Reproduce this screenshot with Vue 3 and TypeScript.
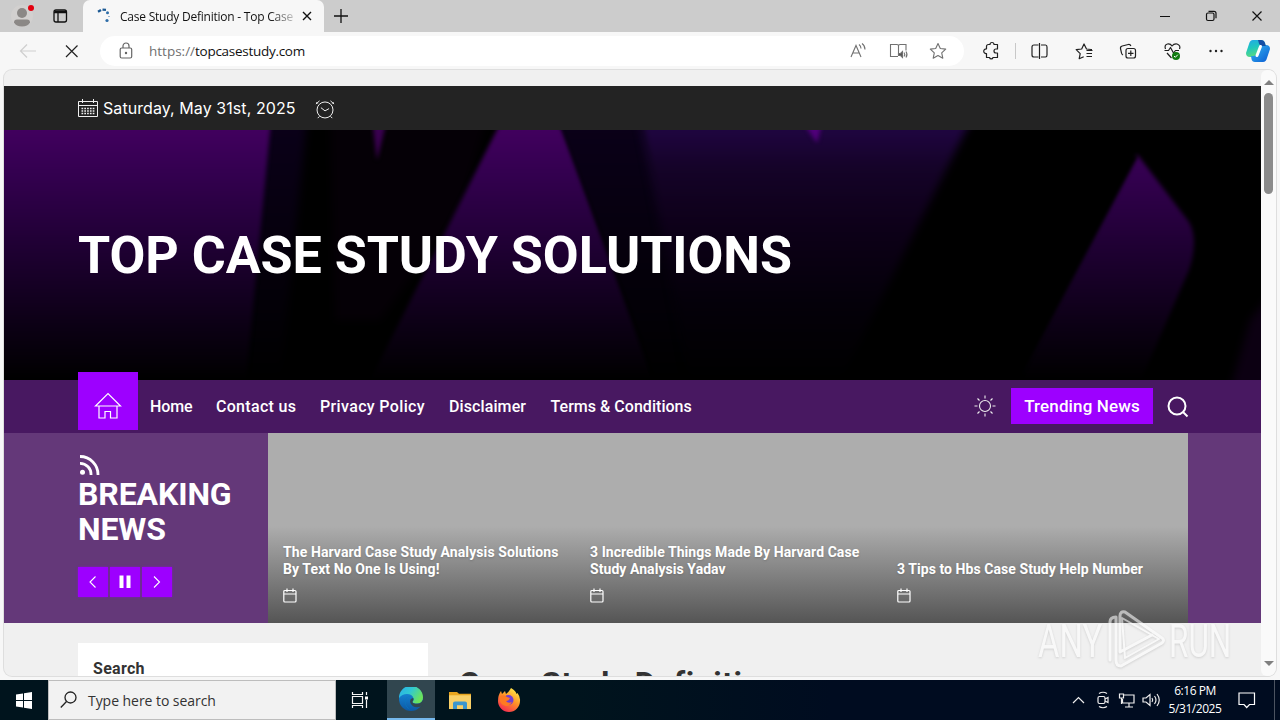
<script setup lang="ts">
interface Card { lines: string[] }
const nav: { label: string; cls: string }[] = [
  { label: 'Home', cls: 'n1' },
  { label: 'Contact us', cls: 'n2' },
  { label: 'Privacy Policy', cls: 'n3' },
  { label: 'Disclaimer', cls: 'n4' },
  { label: 'Terms & Conditions', cls: 'n5' },
]
const cards: Card[] = [
  { lines: ['The Harvard Case Study Analysis Solutions', 'By Text No One Is Using!'] },
  { lines: ['3 Incredible Things Made By Harvard Case', 'Study Analysis Yadav'] },
  { lines: ['3 Tips to Hbs Case Study Help Number'] },
]
</script>

<template>
  <div class="desktop">
    <div class="tabbar">
      <div class="tabtools">
        <svg width="82" height="32" viewBox="0 0 82 32">
          <circle cx="22" cy="16" r="11" fill="#d2d0cf" />
          <circle cx="22" cy="13" r="5" fill="#8b8886" />
          <path d="M14 22.500q0-3 3-3h10q3 0 3 3q-2 4-8 4t-8-4z" fill="#8b8886" />
          <circle cx="31" cy="8" r="3" fill="#e3000f" />
          <rect x="54" y="10" width="12.500" height="12" rx="2" fill="none" stroke="#111" stroke-width="1.300" />
          <path d="M54 12.500h12.500M54.500 11.300h11.500M58 12v10" stroke="#111" stroke-width="1.300" />
        </svg>
      </div>
      <div class="tab">
        <svg class="spinner" width="16" height="16" viewBox="0 0 16 16">
          <path d="M2 3.800 5 2M6.500 1.600 10 1.900" stroke="#1d5a94" stroke-width="2.400" />
          <g fill="#2e6da8"><circle cx="11.500" cy="4.800" r="1.500" /><circle cx="11" cy="12.500" r="1.600" /><circle cx="13" cy="8.500" r=".6" /></g>
        </svg>
        <span class="tabtitle"><span>Case Study Definition - Top Case</span></span>
        <svg width="10" height="10" viewBox="0 0 10 10"><path d="M1 1l8 8M9 1L1 9" stroke="#111" stroke-width="1.400" /></svg>
      </div>
      <svg class="newtab" width="16" height="16" viewBox="0 0 16 16"><path d="M1 8h14M8 1v14" stroke="#111" stroke-width="1.300" /></svg>
      <svg class="winctl" width="120" height="32" viewBox="0 0 120 32" fill="none" stroke="#111" stroke-width="1.200">
        <path d="M10 16.500h10M102.500 11.500l9 9M111.500 11.500l-9 9" />
        <rect x="56.500" y="13" width="7.500" height="7.500" rx="1.500" />
        <path d="M58.500 11.300h5.500q2 0 2 2v5" />
      </svg>
    </div>

    <div class="toolbar">
      <svg class="navicons" width="98" height="38" viewBox="0 0 98 38" fill="none">
        <path d="M36 19H21M27 12.500L20.500 19l6.500 6.500" stroke="#cfcfcf" stroke-width="1.200" />
        <path d="M66 13.500l11.500 11.500M77.500 13.500L66 25" stroke="#222" stroke-width="1.200" />
      </svg>
      <div class="address">
        <svg width="14" height="18" viewBox="0 0 14 18" fill="none" stroke="#666" stroke-width="1.200">
          <rect x="1.200" y="6" width="11.500" height="10" rx="1.500" /><path d="M4 6V4a3 3 0 0 1 6 0v2" /><circle cx="7" cy="11" r=".6" fill="#666" />
        </svg>
        <span class="url"><i>https://</i>topcasestudy.com</span>
        <svg class="addr-icons" width="104" height="20" viewBox="0 0 104 20" fill="none" stroke="#717171" stroke-width="1.100">
          <path d="M3 16L8 4.500 13 16M4.800 12h6.500M11 3.500q2 1.500 2 4M14 2.500q3 2 3 6" />
          <path d="M50 15.500h-7.500V3.500h6.500q1.500 0 1.500 1.500V14.500M50.500 5Q50.500 3.500 52 3.500h6v6" />
          <path d="M50.500 12.500h2l2-2v6l-2-2h-2z" fill="#555" /><path d="M56 11.500q1.500 2 0 4M58 10.500q2 3 0 6" />
          <path d="M90 2.500l2.300 5 5.400.6-4 3.700 1.100 5.400-4.800-2.700-4.800 2.700 1.100-5.400-4-3.700 5.400-.6z" stroke-linejoin="round" />
        </svg>
      </div>
      <svg class="tools" width="306" height="38" viewBox="0 0 306 38" fill="none" stroke="#202020" stroke-width="1.200" stroke-linejoin="round">
        <path d="M11.500 14.500q0-2 2-2h1.500a2 2 0 0 1 4 0h3.500v4.500h-1.500a2 2 0 0 0 0 4H22.500v4.500h-4.500a1.800 1.800 0 0 1-3.500 0h-3V21.500a2.300 2.300 0 1 1 0-4.500z" />
        <path d="M40.500 11v16" stroke="#c8c8c8" stroke-width="1" />
        <path d="M63.500 13h-4.500q-2 0-2 2v8q0 2 2 2h4.500M66 13h4.500q1.500 0 1.500 2v8q0 2-1.500 2H66M64.500 11v16" />
        <path d="M117 17.500h-1l-4.500-.5L109 12l-2.300 5-5.500.7 4 4-1 5 4.500-2M111.500 18.500h6M111.500 21.500h5.500M111.500 24.500h5.500" />
        <rect x="151" y="16.500" width="9.500" height="9.500" rx="2" /><path d="M155.800 18.500v5.500M153 21.300h5.500M148 23q-1.200-.5-1.500-2l-1-4.500q-.3-2 1.700-2.500l6-1.500q2-.4 2.700 1.500" />
        <path d="M190.500 17q-1.500-4 2-5 3-.5 4.500 2 2-2.500 5-2 4 1.500 2.500 5M189.500 18.500h4l2-3 3 5.500 2-2.500h3.500M192 21l4.500 5" />
        <circle cx="201" cy="24" r="4" fill="#0f7b0f" stroke="none" /><path d="M199 24l1.300 1.300 2.500-2.600" stroke="#fff" stroke-width="1" />
        <g fill="#202020" stroke="none"><circle cx="235.500" cy="19" r="1.200" /><circle cx="241" cy="19" r="1.200" /><circle cx="246.500" cy="19" r="1.200" /></g>
      </svg>
      <svg class="copilot" width="26" height="24" viewBox="0 0 26 24">
        <defs>
          <linearGradient id="cpa" x1="0" y1="0" x2=".3" y2="1"><stop offset="0" stop-color="#22a7ea" /><stop offset=".5" stop-color="#20c7bd" /><stop offset="1" stop-color="#59d982" /></linearGradient>
          <linearGradient id="cpb" x1="0" y1="0" x2="1" y2="1"><stop offset="0" stop-color="#35b9f3" /><stop offset="1" stop-color="#0b5bd2" /></linearGradient>
        </defs>
        <path d="M8 1h8q3 0 4 3l.8 3h-3q-2 0-3 3l-2 6q-1 2-3 2H5q-4 0-4-4l3-9q1-4 4-4z" fill="url(#cpa)" />
        <path d="M18 23h-8q-3 0-3.500-3L6 17h3q2 0 3-3l2-6q.8-2 3-2h4q4 0 4 4l-3 9q-1 4-4 4z" fill="url(#cpb)" />
        <path d="M13 1h3q3 0 4 3l.8 3h-3.500Q15 7 14 4.500z" fill="#164fa5" />
        <path d="M15.500 7.500l-3.500 9" stroke="#fff" stroke-width="3" stroke-linecap="round" />
      </svg>
    </div>

    <div class="viewport">
      <main class="page">
        <div class="topbar">
          <svg width="20" height="19" viewBox="0 0 20 19" fill="none" stroke="#f0f0f0" stroke-width="1">
            <path d="M.5 2.500h19v15H.5zM.5 6.500h19M4.500 0v4M15.500 0v4" /><path d="M3.500 9.500h13M3.500 12h13M3.500 14.500h13" stroke-width="1.300" stroke-dasharray="1.700 1.100" />
          </svg>
          <span>Saturday, May 31st, 2025</span>
          <svg class="clock" width="20" height="21" viewBox="0 0 22 22" fill="none" stroke="#eee" stroke-width="1.100">
            <circle cx="11" cy="11.500" r="8.800" /><path d="M11 12.500L6.500 9M11 12.500l4.500-2.500M5 18.500l-2 2M17 18.500l2 2M1 5l4-3.500M21 5l-4-3.500M1.500 3l1.500 1.500M20.500 3L19 4.500" />
          </svg>
        </div>
        <header class="hero">
          <svg class="art" width="1257" height="250" viewBox="4 130 1257 250" preserveAspectRatio="none">
            <defs>
              <linearGradient id="pur" x1="0" y1="130" x2="0" y2="380" gradientUnits="userSpaceOnUse"><stop offset="0" stop-color="#41005e" /><stop offset=".18" stop-color="#33004f" /><stop offset=".5" stop-color="#1d0030" /><stop offset=".8" stop-color="#0b0013" /><stop offset="1" stop-color="#000" /></linearGradient>
              <linearGradient id="mid" x1="0" y1="130" x2="0" y2="380" gradientUnits="userSpaceOnUse"><stop offset="0" stop-color="#1f0540" /><stop offset=".15" stop-color="#150328" /><stop offset=".4" stop-color="#0d0018" /><stop offset=".7" stop-color="#040009" /><stop offset="1" stop-color="#000" /></linearGradient>
              <linearGradient id="navy" x1="0" y1="130" x2="0" y2="380" gradientUnits="userSpaceOnUse"><stop offset="0" stop-color="#0a0018" /><stop offset="1" stop-color="#000" /></linearGradient>
              <filter id="soft" x="-10%" y="-10%" width="120%" height="120%" color-interpolation-filters="sRGB"><feGaussianBlur stdDeviation="2" /></filter>
              <filter id="softer" x="-30%" y="-30%" width="160%" height="160%" color-interpolation-filters="sRGB"><feGaussianBlur stdDeviation="4" /></filter>
            </defs>
            <rect x="4" y="130" width="1257" height="250" fill="#000" />
            <path d="M258 110h50l-28 270h-40z" fill="url(#navy)" filter="url(#softer)" />
            <path d="M330 110h160l-30 100-80 110h-45z" fill="#050006" filter="url(#softer)" />
            <path d="M-20 110h292l-26 270H-20z" fill="url(#pur)" filter="url(#soft)" />
            <path d="M508 108h47l102 282H366l22-45z" fill="url(#pur)" filter="url(#soft)" />
            <path d="M560 125h80l35 110 20 145h-38z" fill="url(#navy)" filter="url(#soft)" />
            <path d="M638 110h338l-136 270H690z" fill="url(#mid)" filter="url(#softer)" />
            <path d="M372 120h15l-10 40z" fill="#3a0050" filter="url(#soft)" />
            <path d="M804 124h18l-5 19z" fill="#51007b" filter="url(#soft)" />
            <path d="M1137 154l52 68q10 18 0 48l-48 110H1018z" fill="url(#pur)" filter="url(#soft)" />
            <path d="M1290 270l-40 50-20 70h50z" fill="#0c0012" filter="url(#softer)" />
            <path d="M1138 155L1017 380h-80l100-225z" fill="#000" filter="url(#soft)" />
          </svg>
          <h1>TOP CASE STUDY SOLUTIONS</h1>
        </header>
        <nav class="mainnav">
          <a class="homebtn">
            <svg width="28" height="28" viewBox="0 0 28 28" fill="none" stroke="#fff" stroke-width="1.200"><path d="M1.500 14L14 1.500 26.500 14zM5 14v12h6v-6.500h5.500V26H23V14" /></svg>
          </a>
          <a v-for="n in nav" :key="n.label" class="item" :class="n.cls">{{ n.label }}</a>
          <div class="navright">
            <svg width="22" height="22" viewBox="0 0 22 22" fill="none" stroke="#eee" stroke-width="1.100"><circle cx="11" cy="11" r="5.500" /><path d="M11 .5v3M11 18.500v3M.5 11h3M18.500 11h3M3.500 3.500l2 2M16.500 16.500l2 2M18.500 3.500l-2 2M5.500 16.500l-2 2" /></svg>
            <a class="trending">Trending News</a>
            <svg class="find" width="22" height="22" viewBox="0 0 22 22" fill="none" stroke="#fff" stroke-width="2"><circle cx="10" cy="10" r="8.500" /><path d="M16 16l4.500 4.500" /></svg>
          </div>
        </nav>
        <section class="breaking">
          <div class="bleft">
            <svg width="22" height="20" viewBox="0 0 22 20" fill="none" stroke="#fff" stroke-width="2.800"><circle cx="4.500" cy="17.200" r="2.500" fill="#fff" stroke="none" /><path d="M2 8.300A11 11 0 0 1 13 20M2 1.500A18 18 0 0 1 20 20" /></svg>
            <h2>BREAKING<br />NEWS</h2>
            <div class="controls">
              <b><svg width="30" height="30" viewBox="0 0 30 30"><path d="M17.500 9.500L12 15l5.500 5.500" /></svg></b>
              <b><svg width="30" height="30" viewBox="0 0 30 30"><path class="bars" d="M11.500 8.500V21M18.500 8.500V21" /></svg></b>
              <b><svg width="30" height="30" viewBox="0 0 30 30"><path d="M12 9.500l5.500 5.500-5.500 5.500" /></svg></b>
            </div>
          </div>
          <div class="cards">
            <article v-for="(c, i) in cards" :key="i" class="card" :class="'c' + i">
              <h3><span v-for="l in c.lines" :key="l">{{ l }}</span></h3>
              <svg width="14" height="15" viewBox="0 0 14 15" fill="none" stroke="#fff" stroke-width="1.200"><rect x=".8" y="2.500" width="12.200" height="11.500" rx="1" /><path d="M1 6h12M4 .5v3.500M10 .5v3.500" /></svg>
            </article>
          </div>
        </section>
        <section class="body">
          <aside>Search</aside>
          <h2>Case Study Definition</h2>
        </section>
      </main>
      <div class="scroll"><i class="up"></i><i class="thumb"></i><i class="down"></i></div>
    </div>

    <footer class="taskbar">
      <div class="start"><svg width="17" height="17" viewBox="0 0 17 17" fill="#fff"><path d="M0 2.500l7-1V8H0zM8 1.300L16 0v8H8zM0 9h7v6.500l-7-1zM8 9h8v8l-8-1.300z" /></svg></div>
      <div class="search">
        <svg width="17" height="18" viewBox="0 0 17 18" fill="none" stroke="#222" stroke-width="1.300"><circle cx="10.500" cy="6.500" r="5.500" /><path d="M6.500 10.500L.8 16.500" /></svg>
        <span>Type here to search</span>
      </div>
      <div class="app view"><svg width="18" height="18" viewBox="0 0 18 18" fill="none" stroke="#f5f5f5" stroke-width="1.200"><path d="M1.500 1v2.500h10V1M1.500 17v-2.500h10V17M1.500 5.500h10v7h-10zM15.500 1v3M15.500 9v8" /><path d="M14 5.500h3v3h-3z" fill="#fff" stroke="none" /></svg></div>
      <div class="app active">
        <svg width="24" height="24" viewBox="0 0 24 24">
          <defs>
            <linearGradient id="eg" x1="0" y1="0" x2="1" y2=".5"><stop offset="0" stop-color="#28aeea" /><stop offset=".5" stop-color="#31c8d3" /><stop offset="1" stop-color="#6be45a" /></linearGradient>
            <linearGradient id="eb" x1="0" y1="0" x2="0" y2="1"><stop offset="0" stop-color="#1990e2" /><stop offset="1" stop-color="#0c59a4" /></linearGradient>
          </defs>
          <circle cx="12" cy="12" r="12" fill="url(#eb)" />
          <path d="M0 11A12 12 0 0 1 24 10.500q0 6-6 6-4.500 0-4.500-1.800 1.500-1.500 1-3.500Q13 7 8 7 3 7 0 11z" fill="url(#eg)" />
          <path d="M14.200 10.500q-4.500-3-7 1.500-2.500 6 4 11-7-4-4.500-11 2.500-4.500 7.500-1.500z" fill="#087bc1" />
          <path d="M14.300 11q.8 2-.9 3.700 0 2 5 2 3.600 0 5.600-4v5q-1 1.500-1.500 1.500-5 2-8.500 0Q10 16 11.500 12.500q1-1.500 2.800-1.500z" fill="#31464f" />
        </svg>
      </div>
      <div class="app"><svg width="22" height="19" viewBox="0 0 22 20" preserveAspectRatio="none"><path d="M0 1h8l2 2h12v5H0z" fill="#e8a51e" /><path d="M0 4.500h22V19H0z" fill="#f9d067" /><path d="M4 19v-6q0-2 2-2h10q2 0 2 2v6h-4v-4H8v4z" fill="#3c97cf" /></svg></div>
      <div class="app"><svg width="24" height="24" viewBox="0 0 24 24">
        <defs><linearGradient id="ff" x1=".8" y1="0" x2=".2" y2="1"><stop offset="0" stop-color="#fff04b" /><stop offset=".45" stop-color="#ff9527" /><stop offset="1" stop-color="#f52354" /></linearGradient></defs>
        <path d="M14 0q5 3 5.500 6l1-1q3 4 2.500 8a11 11 0 0 1-22 0Q1 7 4 3l1 3 3-3 1 3q3-2 5-6z" fill="url(#ff)" />
        <circle cx="11.500" cy="12" r="5" fill="#713fd2" /><path d="M3 8q4-2 7 1l3 1q-1 3-4 3 2 3 6 1-2 4-6 4-5-1-6-5z" fill="#ff7a22" />
      </svg></div>
      <div class="tray">
        <svg width="92" height="20" viewBox="0 0 92 20" fill="none" stroke="#eee" stroke-width="1.200">
          <path d="M1 13l5.500-5.500L12 13" />
          <rect x="26" y="6.500" width="7" height="7" rx="1.500" /><path d="M33 9l3-1.500v5L33 11M27 3.500q4-2.500 8 0M27 16.500q4 2.500 8 0" />
          <path d="M51.500 5H62v8H50.500V9M53 17h8M57 13v4M47.500 4h4v4h-4zM49.500 8v6" />
          <path d="M71 8h3l4-3.500v11L74 12h-3zM80 8q1.500 2 0 4M82.500 6q3 4 0 8M85 4q4.500 6 0 12" />
        </svg>
      </div>
      <div class="time"><span>6:16 PM</span><span>5/31/2025</span></div>
      <svg class="notice" width="18" height="18" viewBox="0 0 18 18" fill="none" stroke="#fff" stroke-width="1.200"><path d="M1 2h15.500v11.500h-5L8.700 16.500 6 13.500H1z" /></svg>
      <i class="peek"></i>
    </footer>

    <div class="watermark">
      <span class="any">ANY</span>
      <svg width="58" height="64" viewBox="0 0 58 64" fill="none" stroke="#fff" stroke-linejoin="round" stroke-linecap="round">
        <path d="M2 52V14q0-5 6-5v43q0 6 5 6l41-23q3-3 0-5L17 4q-5-1-5 4v36l32-17" stroke-width="3" />
        <path d="M14 10l37 21-34 19z" stroke-width="2" />
      </svg>
      <span class="run">RUN</span>
    </div>
  </div>
</template>

<style>
html, body { margin: 0; overflow: hidden; }
</style>
<style scoped>
* { box-sizing: border-box; }
svg { display: block; flex: none; }
.desktop { position: relative; width: 1280px; height: 720px; overflow: hidden; background: #f7f7f7; font-family: "Open Sans", sans-serif; display: flex; flex-direction: column; }
.tabbar { height: 32px; background: #cccccc; display: flex; flex: none; align-items: center; }
.tabtools { width: 83px; height: 32px; }
.tab { width: 241px; height: 32px; background: #f7f7f7; border-radius: 7px 7px 0 0; display: flex; align-items: center; padding-left: 13px; font-size: 12px; color: #111; }
.tabtitle { margin-left: 8px; width: 175px; white-space: nowrap; margin-right: 7px; letter-spacing: -.23px; -webkit-mask-image: linear-gradient(90deg, #000 150px, transparent 180px); mask-image: linear-gradient(90deg, #000 150px, transparent 180px); }
.newtab { margin-left: 9px; }
.winctl { margin-left: auto; margin-right: 10px; }
.toolbar { height: 38px; flex: none; display: flex; align-items: center; background: #f7f7f7; }
.address { height: 30px; width: 864px; margin-left: 2px; border-radius: 15px; background: #fff; display: flex; align-items: center; padding-left: 19px; flex: none; }
.url { margin-left: 16px; font-size: 13.5px; color: #111; letter-spacing: -.28px; }
.url i { font-style: normal; color: #707070; letter-spacing: 0; }
.addr-icons { margin-left: auto; margin-right: 12px; }
.tools { margin-left: 11px; }
.copilot { margin-left: -36px; }
.viewport { flex: none; height: 606px; margin: 0 4px; border-radius: 8px; background: #f0f0f0; overflow: hidden; display: flex; box-shadow: 0 0 0 1px #dedede; }
.page { width: 1257px; padding-top: 16px; flex: none; font-family: Roboto, sans-serif; }
.topbar { height: 44px; background: #232323; display: flex; align-items: center; padding-left: 74px; color: #fff; font-size: 16px; font-family: Inter, sans-serif; }
.topbar span { margin-left: 5px; width: 193px; white-space: nowrap; letter-spacing: .07px; }
.clock { margin-left: 19px; margin-top: 2px; }
.hero { height: 250px; position: relative; background: #000; }
.art { position: absolute; left: 0; top: 0; }
h1, h2, h3 { margin: 0; }
.hero h1 { position: relative; padding: 95px 0 0 74px; font-size: 52px; line-height: 62px; color: #fff; font-weight: 700; white-space: nowrap; letter-spacing: -.03px; }
.mainnav { height: 53px; background: #481861; display: flex; align-items: center; padding-left: 74px; color: #fff; }
.homebtn { width: 60px; height: 58px; margin-top: -11px; background: #9d00ff; display: flex; justify-content: center; padding-top: 20px; align-self: flex-start; position: relative; top: 3px; margin-right: 12px; }
.item { font-size: 16px; font-weight: 500; white-space: nowrap; flex: none; padding-bottom: 1px; }
.n1 { width: 66px; letter-spacing: -.1px; }
.n2 { width: 104px; letter-spacing: .3px; }
.n3 { width: 129px; letter-spacing: .35px; }
.n4 { width: 101.500px; letter-spacing: .1px; }
.n5 { width: 150px; letter-spacing: .03px; }
.navright { display: flex; align-items: center; margin: -2px 72px 0 auto; }
.trending { width: 142px; height: 36px; margin: 0 14px 0 15px; background: #9d00ff; font-size: 17px; font-weight: 500; line-height: 36px; text-align: center; letter-spacing: .12px; white-space: nowrap; }
.find { margin-top: 3px; }
.breaking { height: 190px; background: #643879; display: flex; }
.bleft { width: 264px; padding: 22px 0 0 74px; color: #fff; }
.bleft h2 { font-size: 32px; line-height: 35px; margin-top: 2px; letter-spacing: -.12px; }
.controls { display: flex; gap: 2px; margin-top: 20px; }
.controls b { width: 30px; height: 30px; background: #9d00ff; box-shadow: 0 0 2px #9d00ff88; }
.controls path { fill: none; stroke: #fff; stroke-width: 1.100; }
.controls .bars { stroke-width: 4; }
.cards { width: 920px; display: flex; background: linear-gradient(#adadad 0, #adadad 49%, #555 100%); color: #fff; }
.card { width: 307px; padding: 0 0 20px 15px; display: flex; flex-direction: column; justify-content: flex-end; flex: none; }
.card h3 { font-size: 14px; line-height: 17px; margin-bottom: 10px; font-weight: 700; letter-spacing: .06px; text-shadow: 0 1px 2px #5556; }
.c0 h3 { letter-spacing: .09px; }
.card h3 span { display: block; white-space: nowrap; }
.body { height: 60px; padding: 20px 0 0 74px; display: flex; color: #333; }
.body aside { background: #fff; width: 350px; height: 50px; padding: 15px; font-size: 16px; font-weight: 700; letter-spacing: .3px; line-height: 21px; }
.body h2 { margin: 21px 0 0 31px; font-size: 32px; line-height: 38px; letter-spacing: .5px; white-space: nowrap; }
.scroll { width: 15px; background: #fafafa; border-radius: 6px; display: flex; flex-direction: column; align-items: center; padding: 10px 0 10px; }
.up { border: 5px solid transparent; border-top: 0; border-bottom: 5px solid #808080; }
.thumb { width: 9px; height: 101px; background: #8b8b8b; border-radius: 5px; margin-top: 8px; }
.down { border: 5px solid transparent; border-bottom: 0; border-top: 5px solid #808080; margin-top: auto; }
.taskbar { height: 40px; background: linear-gradient(90deg, #00141d 0, #00141d 45%, #000c20 65%); display: flex; align-items: center; margin-top: 4px; color: #fff; flex: none; }
.start { width: 48px; display: flex; justify-content: center; }
.search { width: 288px; height: 40px; background: #f2f2f2; border: 1px solid #bdbdbd; display: flex; align-items: center; padding-left: 11px; color: #333; font-size: 14px; }
.search span { margin-left: 11px; letter-spacing: -.05px; }
.app { width: 49px; height: 40px; display: flex; align-items: center; justify-content: center; }
.app.view { width: 51px; padding-right: 3px; }
.app.active { width: 48px; background: #31464f; border-bottom: 2px solid #76b9ed; }
.tray { margin-left: auto; }
.time { width: 64px; text-align: center; font-size: 12px; line-height: 18px; letter-spacing: -.45px; margin-left: -1px; }
.time span { display: block; }
.notice { margin-left: 11px; margin-right: 18px; }
.peek { width: 6px; height: 40px; border-left: 1px solid #4b5360; }
.watermark { position: absolute; left: 1038px; top: 608px; display: flex; height: 64px; align-items: center; color: #fff; opacity: .58; filter: drop-shadow(0 1px 1px #8888); font-family: Roboto, sans-serif; font-size: 47px; font-weight: 400; }
.watermark .any { display: block; width: 70px; transform: scaleX(.7); transform-origin: left; }
.watermark .run { display: block; margin-left: 3px; transform: scaleX(.67); transform-origin: left; }
</style>
